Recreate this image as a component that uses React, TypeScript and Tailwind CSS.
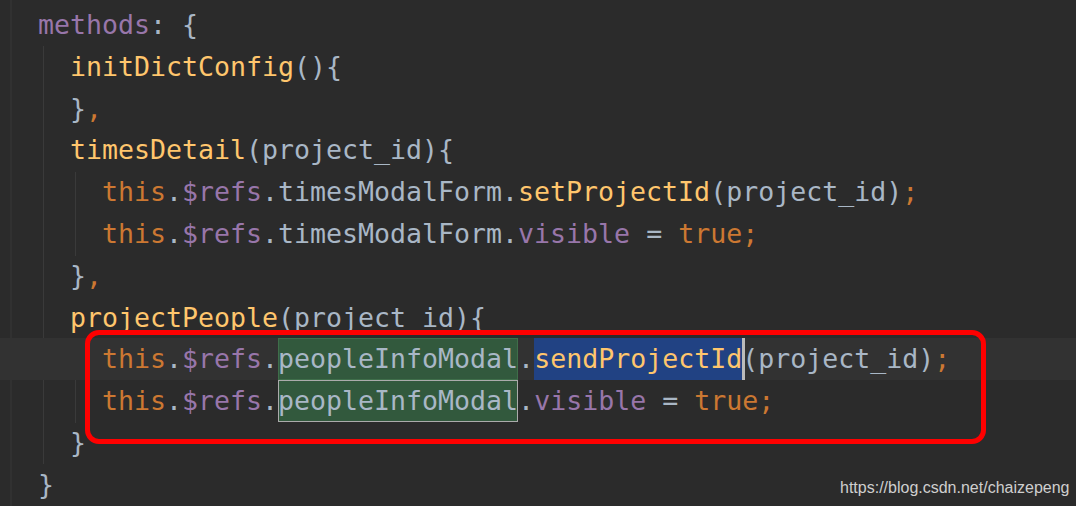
import React from "react";

const fn = "text-[#ffc66d]";
const kw = "text-[#cc7832]";
const prop = "text-[#9876aa]";

function Line({ children, active = false }: { children: React.ReactNode; active?: boolean }) {
  return (
    <div className={`h-[41.8px] pl-[38px] ${active ? "bg-[#323232]" : ""}`}>{children}</div>
  );
}

const Refs = () => (
  <>
    <span className={kw}>this</span>.<span className={prop}>$refs</span>.
  </>
);

export default function App() {
  return (
    <div className="relative h-[506px] w-[1076px] overflow-hidden bg-[#2b2b2b]">
      {/* gutter edge + indent guides */}
      <div className="absolute left-[10px] top-0 h-full w-[2px] bg-[#313131]" />
      <div className="absolute left-[43px] top-[46px] h-[418px] w-px bg-[#3a3a3a]" />
      <div className="absolute left-[75px] top-[172px] h-[84px] w-px bg-[#3a3a3a]" />
      <div className="absolute left-[75px] top-[339px] h-[84px] w-px bg-[#3a3a3a]" />

      <div className="relative whitespace-pre pt-[4px] font-['DejaVu_Sans_Mono',monospace] text-[26.58px] leading-[41.8px] text-[#a9b7c6]">
        <Line>
          <span className={prop}>methods</span>: {"{"}
        </Line>
        <Line>
          {"  "}
          <span className={fn}>initDictConfig</span>(){"{"}
        </Line>
        <Line>
          {"  }"}
          <span className={kw}>,</span>
        </Line>
        <Line>
          {"  "}
          <span className={fn}>timesDetail</span>(project_id){"{"}
        </Line>
        <Line>
          {"    "}
          <Refs />
          timesModalForm.<span className={fn}>setProjectId</span>(project_id)<span className={kw}>;</span>
        </Line>
        <Line>
          {"    "}
          <Refs />
          timesModalForm.<span className={prop}>visible</span> = <span className={kw}>true;</span>
        </Line>
        <Line>
          {"  }"}
          <span className={kw}>,</span>
        </Line>
        <Line>
          {"  "}
          <span className={fn}>projectPeople</span>(project_id){"{"}
        </Line>
        <Line active>
          {"    "}
          <Refs />
          <span className="inline-block h-[41.8px] align-top bg-[#32593d] shadow-[inset_0_0_0_1px_#3f6e4a]">peopleInfoModal</span>.
          <span className={`inline-block h-[41.8px] align-top bg-[#214283] ${fn}`}>sendProjectId</span>
          <span className="-mr-[3px] inline-block h-[41.8px] w-[3px] align-top bg-[#bbbbbb]" />
          (project_id)<span className={kw}>;</span>
        </Line>
        <Line>
          {"    "}
          <Refs />
          <span className="inline-block h-[41.8px] align-top bg-[#32593d] shadow-[inset_0_0_0_1px_#ababab]">peopleInfoModal</span>.
          <span className={prop}>visible</span> = <span className={kw}>true;</span>
        </Line>
        <Line>{"  }"}</Line>
        <Line>{"}"}</Line>
      </div>

      {/* annotation */}
      <div className="absolute left-[85px] top-[330px] h-[114px] w-[901px] rounded-[14px] border-[5px] border-[#ff0000]" />

      <div className="absolute left-[840px] top-[478px] font-['Liberation_Sans',Arial,sans-serif] text-[16px] leading-[20px] text-[#cfcfcf]">
        https://blog.csdn.net/chaizepeng
      </div>
    </div>
  );
}
